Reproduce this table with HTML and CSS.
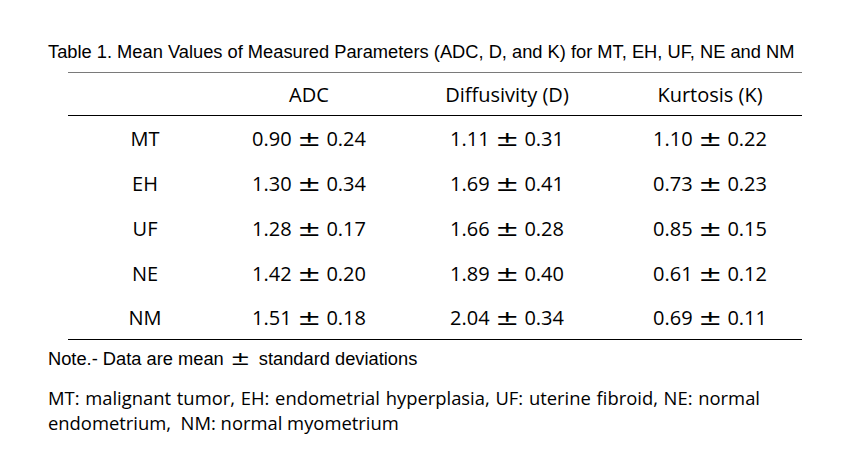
FILE: index.html
```html
<!DOCTYPE html>
<html>
<head>
<meta charset="utf-8">
<link rel="stylesheet" href="styles.css">
</head>
<body>
<div class="page">
  <div class="title">Table 1. Mean Values of Measured Parameters (ADC, D, and K) for MT, EH, UF, NE and NM</div>
  <div class="table">
    <div class="row head">
      <div class="cell"></div>
      <div class="cell">ADC</div>
      <div class="cell">Diffusivity (D)</div>
      <div class="cell">Kurtosis (K)</div>
    </div>
    <div class="row">
      <div class="cell">MT</div>
      <div class="cell">0.90 <span class="pm">±</span> 0.24</div>
      <div class="cell">1.11 <span class="pm">±</span> 0.31</div>
      <div class="cell">1.10 <span class="pm">±</span> 0.22</div>
    </div>
    <div class="row">
      <div class="cell">EH</div>
      <div class="cell">1.30 <span class="pm">±</span> 0.34</div>
      <div class="cell">1.69 <span class="pm">±</span> 0.41</div>
      <div class="cell">0.73 <span class="pm">±</span> 0.23</div>
    </div>
    <div class="row">
      <div class="cell">UF</div>
      <div class="cell">1.28 <span class="pm">±</span> 0.17</div>
      <div class="cell">1.66 <span class="pm">±</span> 0.28</div>
      <div class="cell">0.85 <span class="pm">±</span> 0.15</div>
    </div>
    <div class="row">
      <div class="cell">NE</div>
      <div class="cell">1.42 <span class="pm">±</span> 0.20</div>
      <div class="cell">1.89 <span class="pm">±</span> 0.40</div>
      <div class="cell">0.61 <span class="pm">±</span> 0.12</div>
    </div>
    <div class="row last">
      <div class="cell">NM</div>
      <div class="cell">1.51 <span class="pm">±</span> 0.18</div>
      <div class="cell">2.04 <span class="pm">±</span> 0.34</div>
      <div class="cell">0.69 <span class="pm">±</span> 0.11</div>
    </div>
  </div>
  <div class="note">Note.- Data are mean <span class="pm-note">±</span>&nbsp; standard deviations</div>
  <div class="foot">MT: malignant tumor, EH: endometrial hyperplasia, UF: uterine fibroid, NE: normal endometrium,&nbsp; NM: normal myometrium</div>
</div>
</body>
</html>
```

FILE: styles.css
```css
html, body {
  margin: 0;
  padding: 0;
  background: #ffffff;
}

.page {
  padding: 41px 0 0 48px;
  color: #000000;
}

.title {
  font-family: "Liberation Sans", Arial, sans-serif;
  font-size: 18.3px;
  line-height: 21px;
  white-space: nowrap;
}

.table {
  margin-top: 10px;
  margin-left: 20px;
  width: 734px;
  border-top: 1px solid #7a7a7a;
  font-family: "Open Sans", sans-serif;
  font-size: 20px;
}

.row {
  display: grid;
  grid-template-columns: 154px 174px 222px 184px;
  height: 45px;
  align-items: center;
}

.row.head {
  height: 42px;
  border-bottom: 1px solid #000000;
}

.row.last {
  height: 43px;
  border-bottom: 1px solid #000000;
}

.cell {
  text-align: center;
  white-space: nowrap;
}

.pm {
  display: inline-block;
  font-family: "DejaVu Sans", sans-serif;
  font-size: 22px;
  line-height: 1;
  margin: 0 3px;
  transform: scaleX(1.3);
}

.note {
  margin-top: 8px;
  font-family: "Liberation Sans", Arial, sans-serif;
  font-size: 18.3px;
  line-height: 21px;
}

.pm-note {
  display: inline-block;
  font-family: "DejaVu Sans", sans-serif;
  font-size: 20px;
  line-height: 1;
  margin-left: 3px;
  transform: scaleX(1.2);
}

.foot {
  margin-top: 16px;
  width: 712px;
  font-family: "Open Sans", sans-serif;
  font-size: 18.4px;
  line-height: 25px;
  text-align: justify;
}
```
